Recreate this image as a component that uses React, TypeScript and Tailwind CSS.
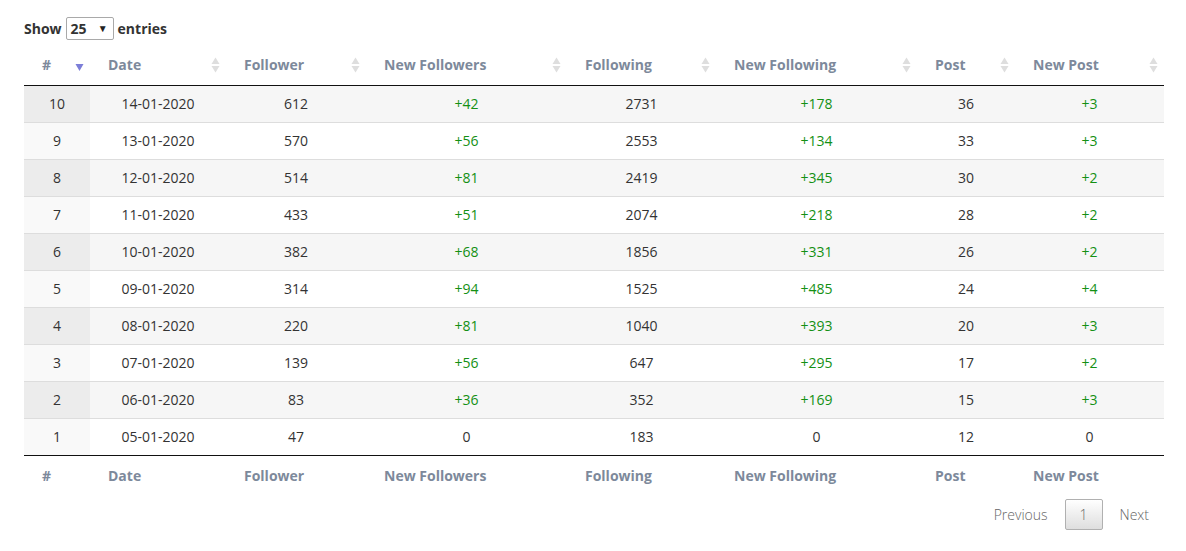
import React from 'react';

const rows = [
  { id: 10, date: '14-01-2020', follower: 612, newFollowers: '+42', following: 2731, newFollowing: '+178', post: 36, newPost: '+3' },
  { id: 9, date: '13-01-2020', follower: 570, newFollowers: '+56', following: 2553, newFollowing: '+134', post: 33, newPost: '+3' },
  { id: 8, date: '12-01-2020', follower: 514, newFollowers: '+81', following: 2419, newFollowing: '+345', post: 30, newPost: '+2' },
  { id: 7, date: '11-01-2020', follower: 433, newFollowers: '+51', following: 2074, newFollowing: '+218', post: 28, newPost: '+2' },
  { id: 6, date: '10-01-2020', follower: 382, newFollowers: '+68', following: 1856, newFollowing: '+331', post: 26, newPost: '+2' },
  { id: 5, date: '09-01-2020', follower: 314, newFollowers: '+94', following: 1525, newFollowing: '+485', post: 24, newPost: '+4' },
  { id: 4, date: '08-01-2020', follower: 220, newFollowers: '+81', following: 1040, newFollowing: '+393', post: 20, newPost: '+3' },
  { id: 3, date: '07-01-2020', follower: 139, newFollowers: '+56', following: 647, newFollowing: '+295', post: 17, newPost: '+2' },
  { id: 2, date: '06-01-2020', follower: 83, newFollowers: '+36', following: 352, newFollowing: '+169', post: 15, newPost: '+3' },
  { id: 1, date: '05-01-2020', follower: 47, newFollowers: '0', following: 183, newFollowing: '0', post: 12, newPost: '0' },
];

const columns = ['#', 'Date', 'Follower', 'New Followers', 'Following', 'New Following', 'Post', 'New Post'];
const widths = ['w-[66px]', 'w-[136px]', 'w-[140px]', 'w-[201px]', 'w-[149px]', 'w-[201px]', 'w-[98px]', 'w-[149px]'];

function SortBoth() {
  return (
    <svg width="9" height="16" viewBox="0 0 9 16" className="shrink-0">
      <path d="M4.5 0.5 L8.5 7 L0.5 7 Z" fill="#dedede" />
      <path d="M4.5 15.5 L8.5 9 L0.5 9 Z" fill="#dedede" />
    </svg>
  );
}

function SortDesc() {
  return (
    <svg width="9" height="16" viewBox="0 0 9 16" className="shrink-0">
      <path d="M4.5 14 L8.5 7 L0.5 7 Z" fill="#7c7ed8" />
    </svg>
  );
}

function Green({ value }: { value: string }) {
  return <span className={value === '0' ? 'text-[#333]' : 'text-[#149014]'}>{value}</span>;
}

export default function App() {
  return (
    <div className="bg-white w-[1186px] h-[551px] px-[24px] pt-[17px] text-[14px] text-[#333]" style={{ fontFamily: '"Open Sans", "Liberation Sans", sans-serif' }}>
      {/* Length selector */}
      <div className="flex items-center gap-[4px] font-bold h-[23px]">
        <span>Show</span>
        <div className="w-[48px] h-[23px] border border-[#a9a9a9] rounded-[2px] flex items-center justify-between pl-[4px] pr-[5px]">
          <span>25</span>
          <span className="text-[10px] text-[#222]">▼</span>
        </div>
        <span>entries</span>
      </div>

      <table className="w-[1140px] mt-[5px] table-fixed border-collapse">
        <colgroup>
          {widths.map((w, i) => (
            <col key={i} className={w} />
          ))}
        </colgroup>
        <thead>
          <tr className="border-b border-[#111]">
            {columns.map((c, i) => (
              <th key={c} className="pl-[18px] pr-[6px] py-[10px] text-left font-bold text-[#7d899b] leading-[20px]">
                <div className="flex items-center justify-between">
                  <span>{c}</span>
                  {i === 0 ? <SortDesc /> : <SortBoth />}
                </div>
              </th>
            ))}
          </tr>
        </thead>
        <tbody>
          {rows.map((r, i) => {
            const odd = i % 2 === 0;
            return (
              <tr key={r.id} className={`${i > 0 ? 'border-t border-[#ddd]' : ''} ${odd ? 'bg-[#f6f6f6]' : 'bg-white'}`}>
                <td className={`py-[8px] px-[10px] text-center leading-[20px] ${odd ? 'bg-[#ececec]' : 'bg-[#f9f9f9]'}`}>{r.id}</td>
                <td className="py-[8px] px-[10px] text-center leading-[20px]">{r.date}</td>
                <td className="py-[8px] px-[10px] text-center leading-[20px]">{r.follower}</td>
                <td className="py-[8px] px-[10px] text-center leading-[20px]"><Green value={r.newFollowers} /></td>
                <td className="py-[8px] px-[10px] text-center leading-[20px]">{r.following}</td>
                <td className="py-[8px] px-[10px] text-center leading-[20px]"><Green value={r.newFollowing} /></td>
                <td className="py-[8px] px-[10px] text-center leading-[20px]">{r.post}</td>
                <td className="py-[8px] px-[10px] text-center leading-[20px]"><Green value={r.newPost} /></td>
              </tr>
            );
          })}
        </tbody>
        <tfoot>
          <tr className="border-t border-[#111]">
            {columns.map((c) => (
              <th key={c} className="pl-[18px] pr-[6px] pt-[10px] pb-[6px] text-left font-bold text-[#7d899b] leading-[20px]">
                {c}
              </th>
            ))}
          </tr>
        </tfoot>
      </table>

      {/* Pagination */}
      <div className="flex justify-end items-center mt-[7px] text-[#666] font-light">
        <span className="px-[17px] leading-[31px]">Previous</span>
        <span className="w-[38px] h-[31px] flex items-center justify-center border border-[#b0b0b0] rounded-[2px] bg-gradient-to-b from-white to-[#dedede] text-[#666]">1</span>
        <span className="pl-[17px] pr-[13px] leading-[31px]">Next</span>
      </div>
    </div>
  );
}
